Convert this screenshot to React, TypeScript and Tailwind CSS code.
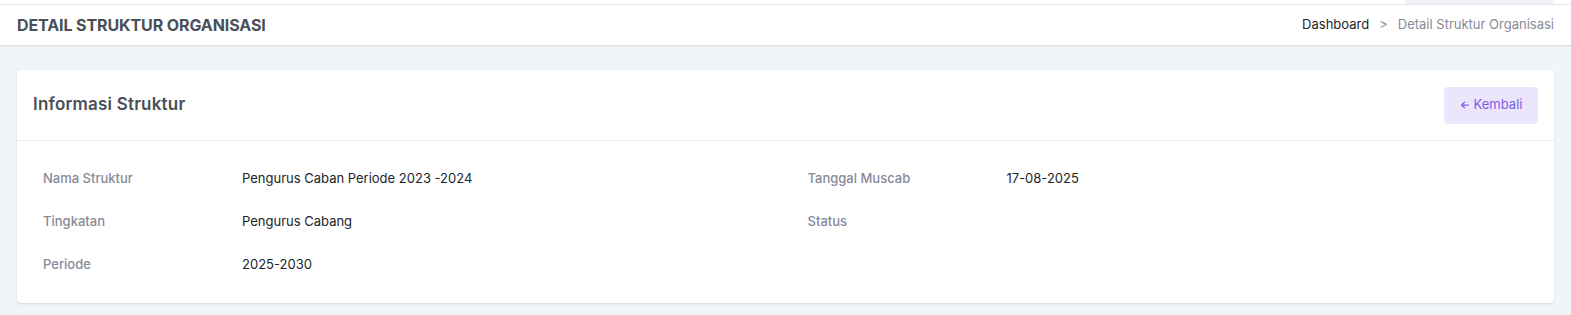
import React from "react";

const rowsLeft = [
  { label: "Nama Struktur", value: "Pengurus Caban Periode 2023 -2024" },
  { label: "Tingkatan", value: "Pengurus Cabang" },
  { label: "Periode", value: "2025-2030" },
];
const rowsRight = [
  { label: "Tanggal Muscab", value: "17-08-2025" },
  { label: "Status", value: "" },
];

function Row({ label, value }: { label: string; value: string }) {
  return (
    <div className="flex h-[43px] items-center">
      <div className="w-[199px] shrink-0 px-[10px] text-[13px] font-medium text-[#878a99]">{label}</div>
      <div className="px-[10px] text-[13px] text-[#212529]">{value}</div>
    </div>
  );
}

export default function App() {
  return (
    <div
      className="min-h-[315px] bg-[#f2f5f8]"
      style={{ fontFamily: "Inter, 'Noto Sans', sans-serif" }}
    >
      <div className="flex h-[5px] justify-end border-b border-[#e9ebec] bg-white">
        <div className="mr-[18px] h-[4px] w-[148px] bg-[#f1f1f8]" />
      </div>
      <div className="flex h-[40px] items-center justify-between bg-white px-[17px] shadow-[0_1px_2px_rgba(56,65,74,0.15)]">
        <h4 className="text-[16px] font-bold uppercase tracking-[-0.1px] text-[#495057]">
          Detail Struktur Organisasi
        </h4>
        <div className="flex items-center text-[13px]">
          <span className="text-[#212529]">Dashboard</span>
          <span className="px-[10px] text-[#878a99]">&gt;</span>
          <span className="text-[#878a99]">Detail Struktur Organisasi</span>
        </div>
      </div>
      <div className="px-[17px] pt-[25px] pb-[12px]">
        <div className="rounded-[4px] bg-white shadow-[0_1px_2px_rgba(56,65,74,0.15)]">
          <div className="flex h-[71px] items-center justify-between border-b border-[#e9ebec] px-4">
            <h5 className="text-[17px] font-semibold tracking-[0.2px] text-[#495057]">Informasi Struktur</h5>
            <button className="flex h-[37px] w-[94px] items-center justify-center gap-1 rounded-[4px] bg-[#ebe6fb] text-[13px] text-[#7d5de8]">
              <svg width="10" height="10" viewBox="0 0 24 24" fill="none" stroke="currentColor" strokeWidth="3" strokeLinecap="round" strokeLinejoin="round">
                <path d="M20 12H5" />
                <path d="M11 5l-7 7 7 7" />
              </svg>
              <span>Kembali</span>
            </button>
          </div>
          <div className="grid grid-cols-2 gap-x-6 px-4 pt-[16px] pb-[17px]">
            <div>
              {rowsLeft.map((r) => (
                <Row key={r.label} {...r} />
              ))}
            </div>
            <div>
              {rowsRight.map((r) => (
                <Row key={r.label} {...r} />
              ))}
            </div>
          </div>
        </div>
      </div>
    </div>
  );
}
